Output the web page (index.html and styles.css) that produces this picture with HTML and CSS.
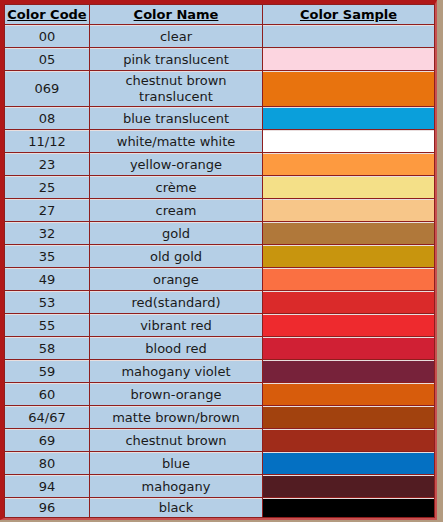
FILE: index.html
```html
<!DOCTYPE html>
<html lang="en">

<head>
    <meta charset="UTF-8">
    <meta name="viewport" content="width=device-width, initial-scale=1.0">
    <title>Color Chart</title>
    <link rel="stylesheet" href="styles.css">
</head>

<body>
    <table class="chart">
        <colgroup>
            <col class="col-code">
            <col class="col-name">
            <col class="col-sample">
        </colgroup>
        <thead>
            <tr>
                <th>Color Code</th>
                <th>Color Name</th>
                <th>Color Sample</th>
            </tr>
        </thead>
        <tbody>
            <tr><td>00</td><td>clear</td><td class="swatch"></td></tr>
            <tr><td>05</td><td>pink translucent</td><td class="swatch c05"></td></tr>
            <tr class="tall"><td>069</td><td>chestnut brown<br>translucent</td><td class="swatch c069"></td></tr>
            <tr><td>08</td><td>blue translucent</td><td class="swatch c08"></td></tr>
            <tr><td>11/12</td><td>white/matte white</td><td class="swatch c11"></td></tr>
            <tr><td>23</td><td>yellow-orange</td><td class="swatch c23"></td></tr>
            <tr><td>25</td><td>crème</td><td class="swatch c25"></td></tr>
            <tr><td>27</td><td>cream</td><td class="swatch c27"></td></tr>
            <tr><td>32</td><td>gold</td><td class="swatch c32"></td></tr>
            <tr><td>35</td><td>old gold</td><td class="swatch c35"></td></tr>
            <tr><td>49</td><td>orange</td><td class="swatch c49"></td></tr>
            <tr><td>53</td><td>red(standard)</td><td class="swatch c53"></td></tr>
            <tr><td>55</td><td>vibrant red</td><td class="swatch c55"></td></tr>
            <tr><td>58</td><td>blood red</td><td class="swatch c58"></td></tr>
            <tr><td>59</td><td>mahogany violet</td><td class="swatch c59"></td></tr>
            <tr><td>60</td><td>brown-orange</td><td class="swatch c60"></td></tr>
            <tr><td>64/67</td><td>matte brown/brown</td><td class="swatch c64"></td></tr>
            <tr><td>69</td><td>chestnut brown</td><td class="swatch c69"></td></tr>
            <tr><td>80</td><td>blue</td><td class="swatch c80"></td></tr>
            <tr><td>94</td><td>mahogany</td><td class="swatch c94"></td></tr>
            <tr class="last"><td>96</td><td>black</td><td class="swatch c96"></td></tr>
        </tbody>
    </table>
</body>

</html>
```

FILE: styles.css
```css
body {
    margin: 0;
    padding: 0;
    background-color: #b39b80;
    font-family: "DejaVu Sans", Verdana, sans-serif;
}

.chart {
    table-layout: fixed;
    width: 437px;
    border-collapse: separate;
    border-spacing: 1px;
    background-color: #8e1e1e;
    border-style: solid;
    border-width: 4px 2px 2px 4px;
    border-color: #b01818 #c85050 #c85050 #b01818;
}

.col-code {
    width: 84px;
}

.col-name {
    width: 172px;
}

th,
td {
    background-color: #b5cfe6;
    color: #1a1a1a;
    font-size: 13px;
    line-height: 16px;
    text-align: center;
    padding: 2px 2px 2px;
    height: 17px;
    border-top: 1px solid #e9dede;
}

th {
    color: #000;
    font-weight: bold;
    text-decoration: underline;
    height: 15px;
    border-top: none;
    padding: 2px 2px 1px;
}

.tall td {
    padding: 1px 2px;
}

.last td {
    height: 14px;
    padding: 1px 2px 1px;
}

.swatch.c05 { background-color: #fcd5e0; }
.swatch.c069 { background-color: #e8730e; }
.swatch.c08 { background-color: #0a9fdb; }
.swatch.c11 { background-color: #ffffff; }
.swatch.c23 { background-color: #fd9a40; }
.swatch.c25 { background-color: #f4e088; }
.swatch.c27 { background-color: #f7c689; }
.swatch.c32 { background-color: #b0783a; }
.swatch.c35 { background-color: #c8950e; }
.swatch.c49 { background-color: #fa7042; }
.swatch.c53 { background-color: #da2a2a; }
.swatch.c55 { background-color: #ee2a2e; }
.swatch.c58 { background-color: #d02034; }
.swatch.c59 { background-color: #77223a; }
.swatch.c60 { background-color: #d75c0c; }
.swatch.c64 { background-color: #a2420e; }
.swatch.c69 { background-color: #a02c1a; }
.swatch.c80 { background-color: #0470c2; }
.swatch.c94 { background-color: #521c22; }
.swatch.c96 { background-color: #000000; }
```
